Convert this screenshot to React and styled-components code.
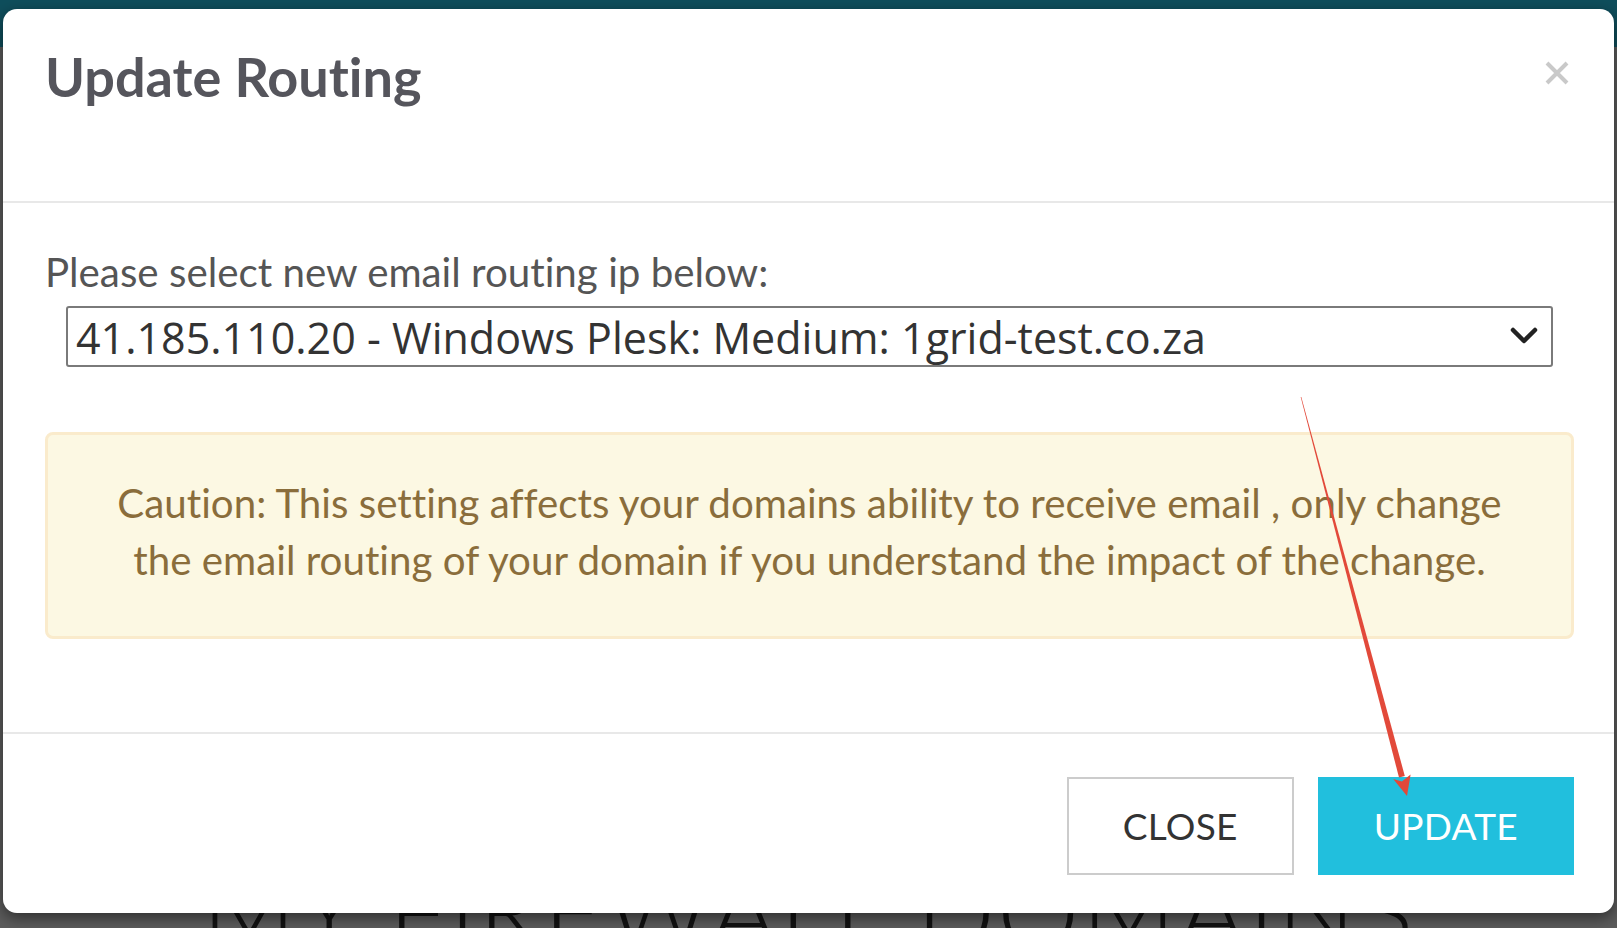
import React from "react";
import styled, { createGlobalStyle } from "styled-components";

const GlobalStyle = createGlobalStyle`
  html, body {
    margin: 0;
    padding: 0;
    height: 100%;
    overflow: hidden;
  }
  body {
    font-family: Lato, "Liberation Sans", sans-serif;
    font-variant-ligatures: none;
    background: #ffffff;
  }
  * { box-sizing: border-box; }
`;

const Page = styled.div`
  position: relative;
  width: 100%;
  height: 100vh;
  background: #ffffff;
  overflow: hidden;
`;

const TopBar = styled.header`
  height: 47px;
  background: #2ad9ff;
`;

const PageHeading = styled.h1`
  margin: 811px 0 0;
  text-align: center;
  font-family: Lato, "Liberation Sans", sans-serif;
  font-weight: 300;
  font-size: 104px;
  line-height: 104px;
  letter-spacing: 2px;
  white-space: nowrap;
  color: #333333;
`;

const Backdrop = styled.div`
  position: absolute;
  inset: 0;
  background: rgba(0, 0, 0, 0.64);
`;

const ModalLayer = styled.div`
  position: absolute;
  inset: 0;
  display: flex;
  justify-content: center;
  align-items: flex-start;
  padding: 9px 3px 0;
`;

const Modal = styled.div`
  width: 100%;
  background: #ffffff;
  border-radius: 14px;
  box-shadow: 0 5px 15px rgba(0, 0, 0, 0.5);
`;

const ModalHeader = styled.div`
  display: flex;
  justify-content: space-between;
  align-items: flex-start;
  padding: 38px 44px 94px 42px;
  border-bottom: 2px solid #e8e8e8;
`;

const Title = styled.h4`
  margin: 0;
  font-family: Lato, "Liberation Sans", sans-serif;
  font-weight: 700;
  font-size: 54px;
  line-height: 60px;
  color: #55555c;
`;

const CloseX = styled.button`
  margin-top: 13px;
  padding: 0;
  border: 0;
  background: transparent;
  width: 26px;
  height: 26px;
  cursor: pointer;
  display: flex;
`;

const ModalBody = styled.div`
  padding: 40px 40px 93px 42px;
`;

const Label = styled.label`
  display: block;
  font-size: 40.3px;
  line-height: 57.6px;
  color: #555555;
`;

const SelectWrap = styled.div`
  position: relative;
  margin: 5px 21px 0 21px;
`;

const Select = styled.select`
  appearance: none;
  -webkit-appearance: none;
  display: block;
  width: 100%;
  height: 61px;
  padding: 0 60px 0 8px;
  border: 2px solid #7a7a7a;
  border-radius: 3px;
  background: #ffffff;
  font-family: "Open Sans", "Liberation Sans", sans-serif;
  font-size: 43px;
  color: #333333;
  outline: none;
`;

const Chevron = styled.svg`
  position: absolute;
  right: 15px;
  top: 50%;
  transform: translateY(-50%);
  pointer-events: none;
`;

const Alert = styled.div`
  margin-top: 65px;
  padding: 39px 43px 47px;
  background: #fcf8e3;
  border: 3px solid #faebcc;
  border-radius: 8px;
  color: #8a6d3b;
  font-size: 40.3px;
  line-height: 57.6px;
  text-align: center;
`;

const ModalFooter = styled.div`
  display: flex;
  justify-content: flex-end;
  gap: 24px;
  padding: 43px 40px 38px 42px;
  border-top: 2px solid #e8e8e8;
`;

const Button = styled.button`
  height: 98px;
  padding: 0 54px;
  font-family: Lato, "Liberation Sans", sans-serif;
  font-size: 37px;
  font-weight: 400;
  letter-spacing: 0.3px;
  cursor: pointer;
  border-radius: 0;
  border: 2px solid ${(p) => (p.$primary ? "#21bfdd" : "#cccccc")};
  background: ${(p) => (p.$primary ? "#21bfdd" : "#ffffff")};
  color: ${(p) => (p.$primary ? "#ffffff" : "#333333")};
`;

const Annotation = styled.svg`
  position: absolute;
  left: 0;
  top: 0;
  pointer-events: none;
`;

export default function App() {
  return (
    <>
      <GlobalStyle />
      <Page>
        <TopBar />
        <PageHeading>MY FIREWALL DOMAINS</PageHeading>
        <Backdrop />
        <ModalLayer>
          <Modal role="dialog" aria-labelledby="update-routing-title">
            <ModalHeader>
              <Title id="update-routing-title">Update Routing</Title>
              <CloseX aria-label="Close">
                <svg width="26" height="26" viewBox="0 0 26 26">
                  <path
                    d="M3 3 L23 23 M23 3 L3 23"
                    stroke="#c9c9c9"
                    strokeWidth="4"
                    strokeLinecap="butt"
                  />
                </svg>
              </CloseX>
            </ModalHeader>
            <ModalBody>
              <Label htmlFor="routing-ip">Please select new email routing ip below:</Label>
              <SelectWrap>
                <Select id="routing-ip" defaultValue="41.185.110.20">
                  <option value="41.185.110.20">
                    41.185.110.20 - Windows Plesk: Medium: 1grid-test.co.za
                  </option>
                </Select>
                <Chevron width="28" height="18" viewBox="0 0 28 18">
                  <path
                    d="M3 3 L14 14 L25 3"
                    fill="none"
                    stroke="#222222"
                    strokeWidth="4.5"
                    strokeLinecap="round"
                    strokeLinejoin="round"
                  />
                </Chevron>
              </SelectWrap>
              <Alert>
                Caution: This setting affects your domains ability to receive email , only change
                the email routing of your domain if you understand the impact of the change.
              </Alert>
            </ModalBody>
            <ModalFooter>
              <Button>CLOSE</Button>
              <Button $primary>UPDATE</Button>
            </ModalFooter>
          </Modal>
        </ModalLayer>
        <Annotation width="1617" height="928" viewBox="0 0 1617 928">
          <polygon
            points="1300.7,397.1 1301.3,396.9 1404.8,775.9 1399.0,777.5"
            fill="#e2493a"
          />
          <polygon
            points="1407,796 1393.2,779.0 1401.9,781.5 1410.6,774.4"
            fill="#e2493a"
          />
        </Annotation>
      </Page>
    </>
  );
}
